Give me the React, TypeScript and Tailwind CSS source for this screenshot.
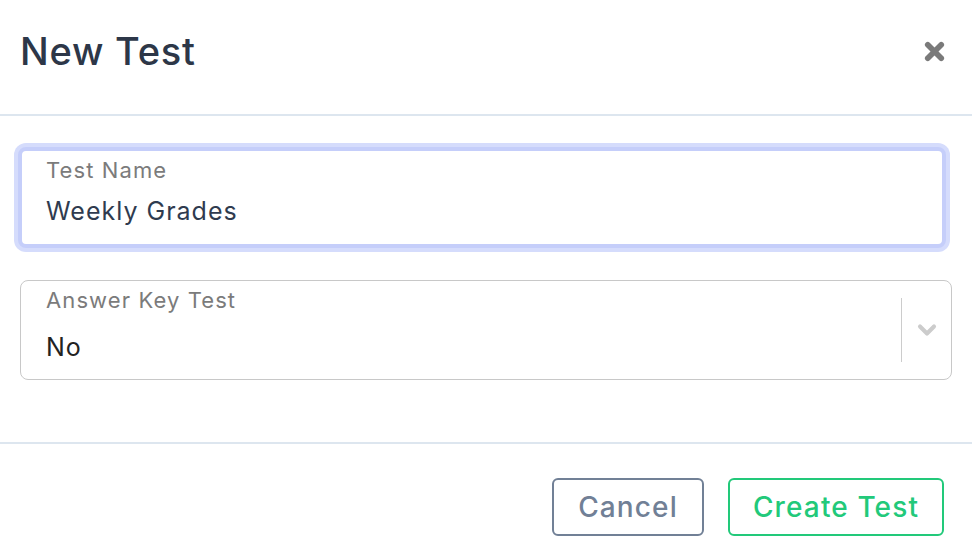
import { ChevronDown, X } from "lucide-react";

export default function App() {
  return (
    <div
      className="w-[972px] h-[552px] overflow-hidden bg-white flex flex-col"
      style={{ fontFamily: "Inter, 'Open Sans', sans-serif" }}
    >
      {/* header */}
      <div className="h-[116px] shrink-0 flex items-center justify-between pl-5 pr-6 border-b-2 border-[#dde6ef]">
        <h2 className="text-[38px] font-medium text-[#2d3748] tracking-[0.02em] -mt-3">New Test</h2>
        <button className="-mt-3 text-[#7a7a7a]">
          <X className="w-[27px] h-[27px]" strokeWidth={5} />
        </button>
      </div>

      {/* body */}
      <div className="flex-1 flex flex-col pt-[31px] gap-[32px] border-b-2 border-[#dde6ef]">
        <div className="ml-[18px] mr-[26px] h-[101px] rounded-lg border-4 border-[#c5cefa] shadow-[0_0_0_4px_#d5dcfc] bg-white px-6 pt-[3px]">
          <div className="text-[22px] text-[#7b7b7b] tracking-[0.05em]">Test Name</div>
          <div className="text-[25px] text-[#2f3b4f] tracking-[0.04em] mt-[6px]">Weekly Grades</div>
        </div>

        <div className="mx-5 h-[100px] rounded-lg border-[1.5px] border-[#c8c8c8] flex items-center">
          <div className="flex-1 self-start pl-[25px] pt-[3px]">
            <div className="text-[22px] text-[#7b7b7b] tracking-[0.05em]">Answer Key Test</div>
            <div className="text-[25px] text-[#222] tracking-[0.04em] mt-[12px]">No</div>
          </div>
          <div className="w-[1.5px] h-[64px] bg-[#cccccc]" />
          <div className="w-[49px] flex items-center justify-center text-[#cccccc]">
            <ChevronDown className="w-[28px] h-[28px]" strokeWidth={3.5} />
          </div>
        </div>
      </div>

      {/* footer */}
      <div className="h-[108px] shrink-0 flex items-center justify-end gap-6 pr-7 pt-[17px]">
        <button className="h-[58px] w-[152px] rounded-md border-2 border-[#718096] text-[#718096] text-[28px] font-medium tracking-[0.04em]">
          Cancel
        </button>
        <button className="h-[58px] w-[216px] rounded-md border-2 border-[#22c97a] text-[#22c97a] text-[28px] font-medium tracking-[0.04em]">
          Create Test
        </button>
      </div>
    </div>
  );
}
